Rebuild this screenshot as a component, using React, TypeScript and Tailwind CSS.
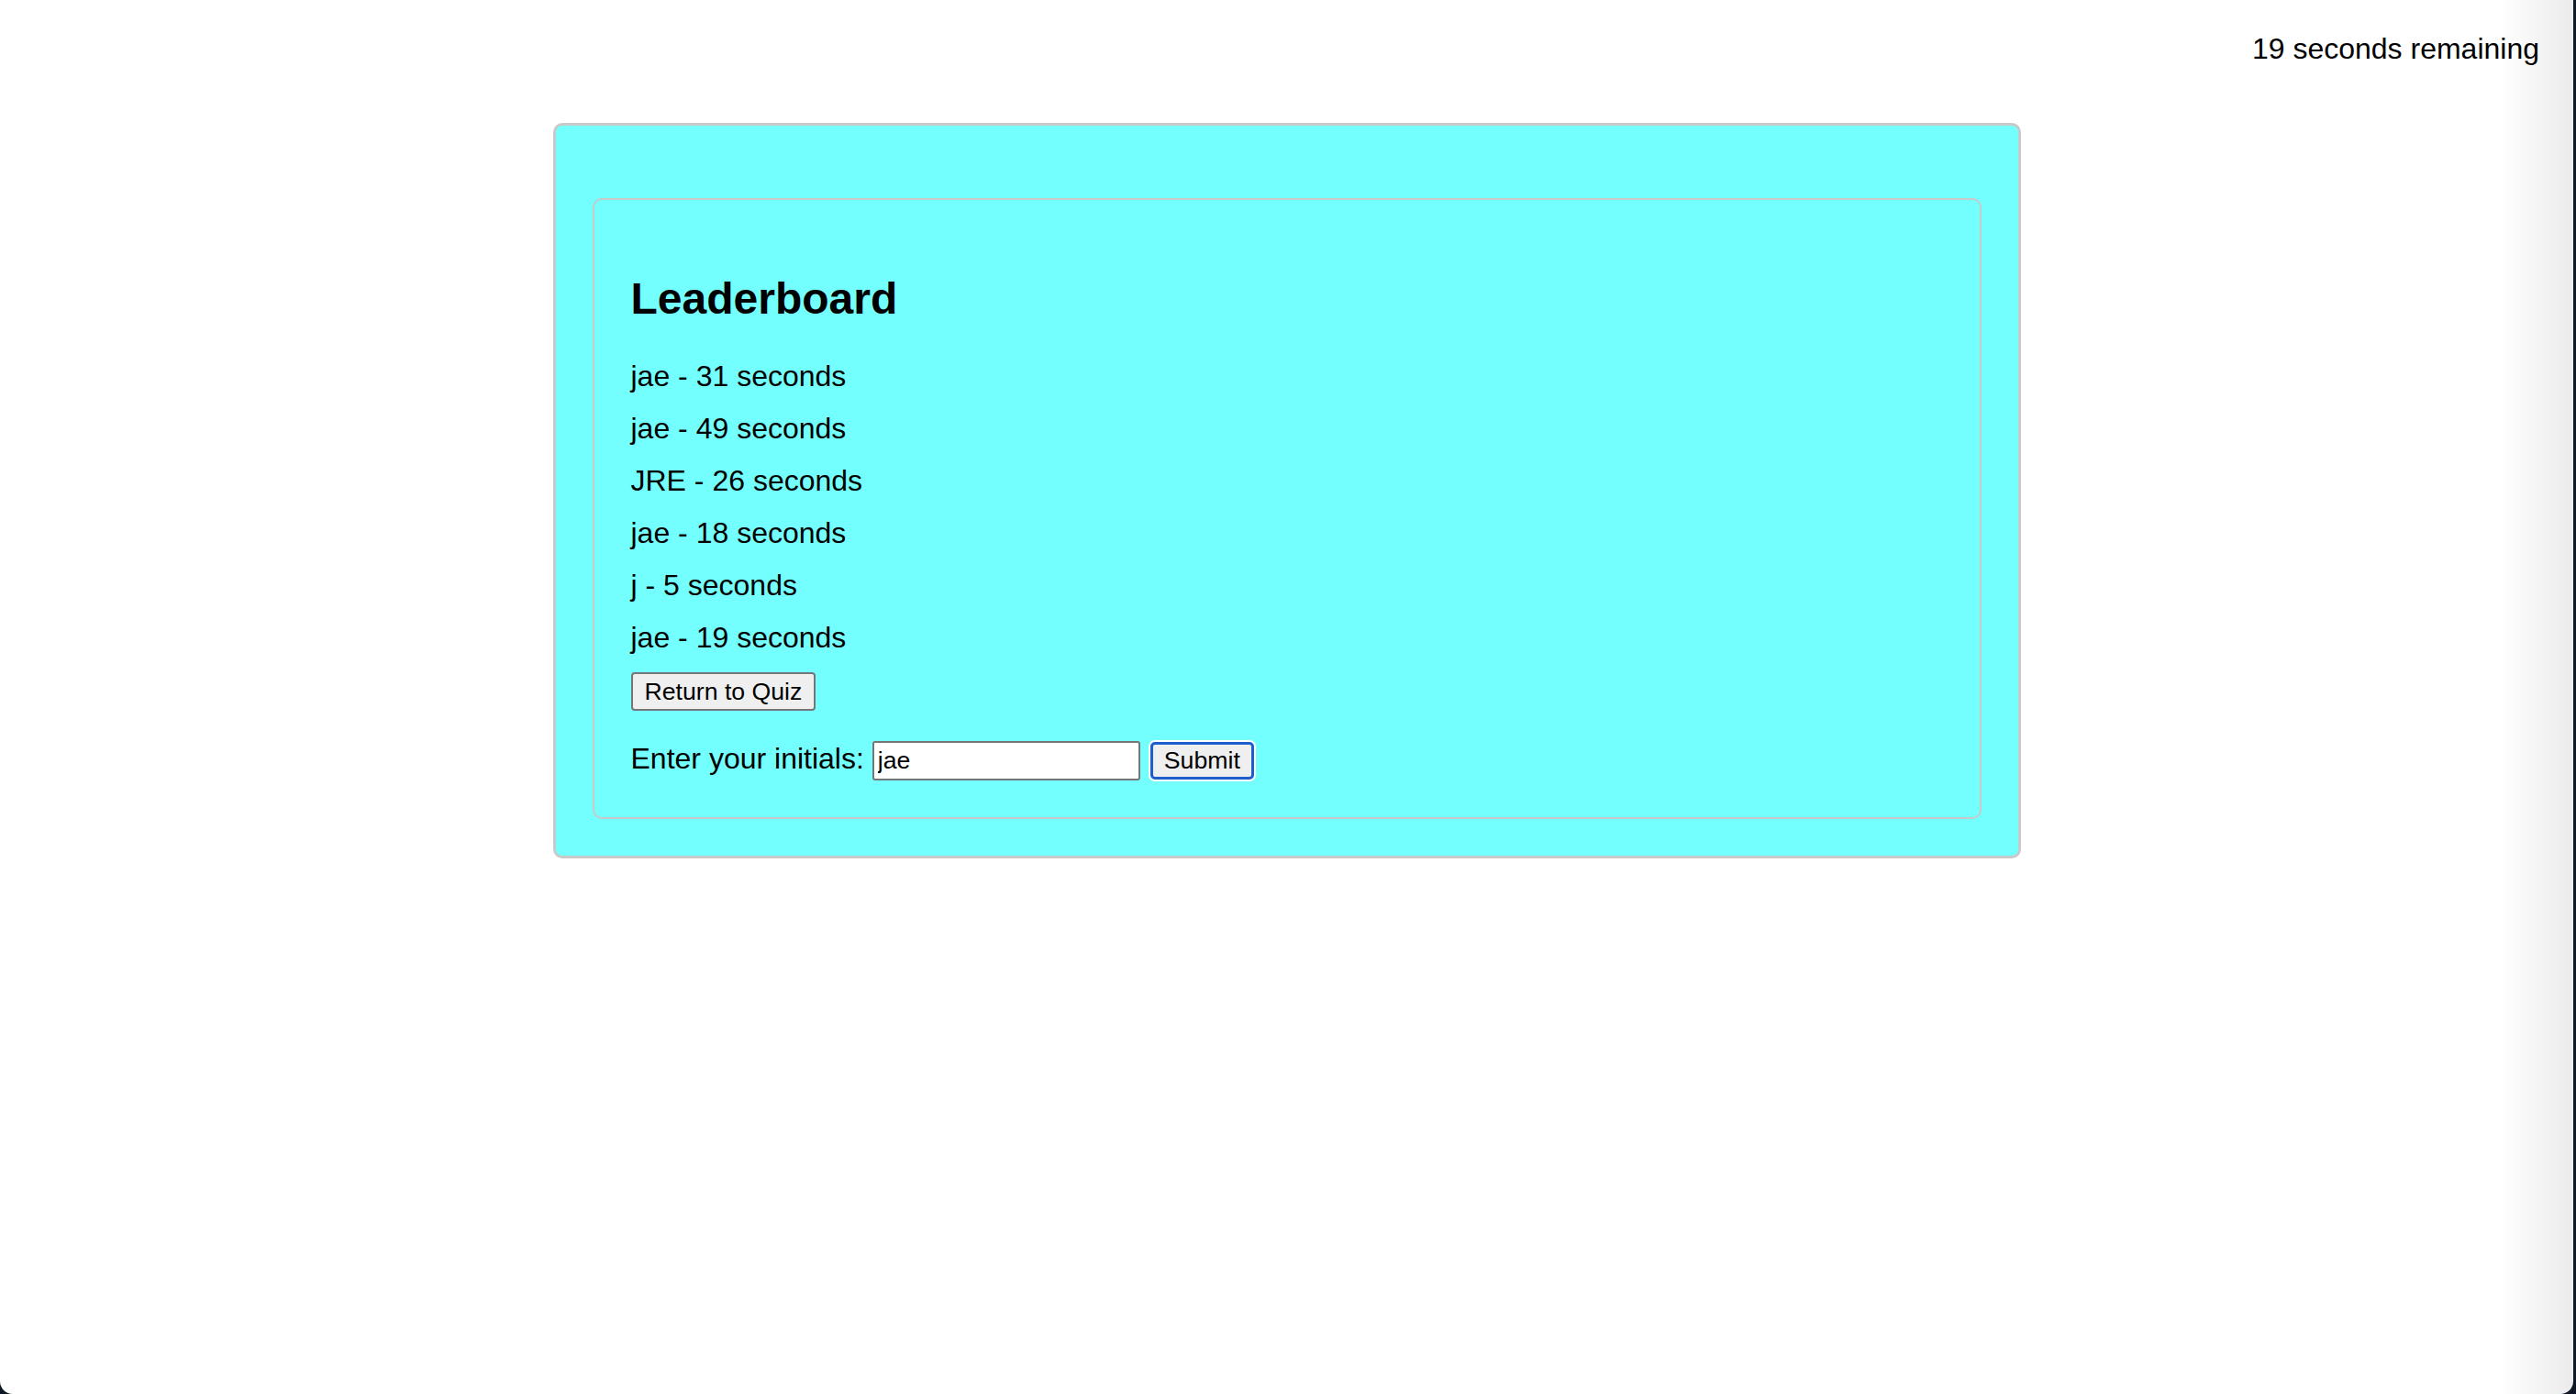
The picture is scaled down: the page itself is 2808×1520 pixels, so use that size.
const scores = [
  { initials: "jae", time: 31 },
  { initials: "jae", time: 49 },
  { initials: "JRE", time: 26 },
  { initials: "jae", time: 18 },
  { initials: "j", time: 5 },
  { initials: "jae", time: 19 },
];

export default function App() {
  return (
    <div className="flex h-[1520px] w-[2808px] bg-[#0e1726] font-['Liberation_Sans',Arial,sans-serif] text-black">
      <div className="h-full w-[2805px] rounded-b-[14px] bg-[linear-gradient(to_right,#ffffff_2725px,#ebebeb)]">
        <div className="flex justify-end pr-[37px] pt-[35px] text-[32px] leading-[37px]">19 seconds remaining</div>

        <div className="mx-auto mt-[62px] w-[1600px] rounded-[10px] border-[3px] border-[#c9c9c9] bg-[#74ffff] px-[40px] pb-[40px] pt-[79px]">
          <div className="rounded-[10px] border-2 border-[#c9c9c9] px-[40px] pb-[40px] pt-[40px]">
            <h2 className="mt-[41px] text-[48px] font-bold leading-[54px]">Leaderboard</h2>

            <ul className="mt-[38.5px] flex flex-col gap-[20.1px]">
              {scores.map((s, i) => (
                <li key={i} className="text-[32px] leading-[37px]">
                  {s.initials} - {s.time} seconds
                </li>
              ))}
            </ul>

            <button className="mt-[19px] rounded-[4px] border-2 border-[#767676] bg-[#efefef] px-[13px] py-[2px] text-[26.67px] leading-[34px]">
              Return to Quiz
            </button>

            <div className="mt-[33px] flex items-baseline">
              <label className="text-[32px] leading-[37px]">Enter your initials:</label>
              <input
                defaultValue="jae"
                className="ml-[9px] w-[292px] rounded-[3px] border-2 border-[#767676] bg-white px-[4px] py-[2px] text-[26.67px] leading-[35px] outline-none"
              />
              <button className="ml-[11px] rounded-[5px] border-[3px] border-[#1e5fcf] bg-[#efefef] px-[12px] py-[1px] text-[26.67px] leading-[33px] shadow-[0_0_0_2px_#ffffff]">
                Submit
              </button>
            </div>
          </div>
        </div>
      </div>
    </div>
  );
}
